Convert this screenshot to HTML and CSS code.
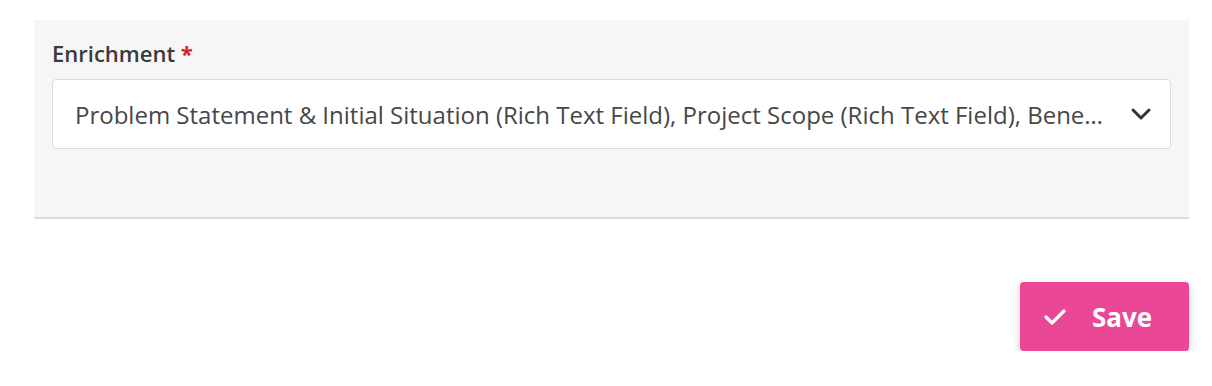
FILE: index.html
```html
<!DOCTYPE html>
<html>
<head>
<meta charset="utf-8">
<link rel="stylesheet" href="styles.css">
</head>
<body>
<div class="page">
  <div class="panel">
    <label class="field-label">Enrichment <span class="req">*</span></label>
    <div class="select">
      <span class="select-text">Problem Statement &amp; Initial Situation (Rich Text Field), Project Scope (Rich Text Field), Benefits (Rich Text Field), Risks (Rich Text Field)</span>
      <svg class="chev" width="22" height="14" viewBox="0 0 22 14"><path d="M3 3 L11 11 L19 3" fill="none" stroke="#333" stroke-width="3" stroke-linecap="round" stroke-linejoin="round"/></svg>
    </div>
  </div>
  <div class="actions">
    <button class="btn-save">
      <svg width="24" height="20" viewBox="0 0 24 20"><path d="M3 10 L9 16 L21 4" fill="none" stroke="#fff" stroke-width="3.2" stroke-linecap="round" stroke-linejoin="round"/></svg>
      <span>Save</span>
    </button>
  </div>
</div>
</body>
</html>
```
FILE: styles.css
```css
html, body {
  margin: 0;
  padding: 0;
  background: #fff;
  font-family: "Open Sans", "Noto Sans", sans-serif;
}
.page {
  padding: 20px 23px 0 34px;
}
.panel {
  background: #f6f6f6;
  border-bottom: 2px solid #dcdcdc;
  padding: 20px 18px 68px 18px;
}
.field-label {
  display: block;
  font-size: 22px;
  font-weight: 600;
  color: #3a3a3a;
  line-height: 26px;
  margin-bottom: 13px;
}
.req {
  color: #d0202a;
  font-weight: 700;
}
.select {
  display: flex;
  align-items: center;
  height: 70px;
  background: #fff;
  border: 1px solid #d9dce1;
  border-radius: 4px;
  padding: 0 18px 0 22px;
  box-sizing: border-box;
}
.select-text {
  flex: 1;
  min-width: 0;
  white-space: nowrap;
  overflow: hidden;
  text-overflow: ellipsis;
  font-size: 24px;
  color: #474747;
  padding-right: 26px;
}
.chev {
  flex: none;
}
.actions {
  display: flex;
  justify-content: flex-end;
  padding-top: 63px;
}
.btn-save {
  display: flex;
  align-items: center;
  gap: 25px;
  width: 169px;
  height: 69px;
  padding: 0 0 0 23px;
  border: none;
  border-radius: 4px;
  background: #ea4797;
  color: #fff;
  font-family: "Open Sans", "Noto Sans", sans-serif;
  font-size: 26px;
  font-weight: 700;
  box-shadow: 0 3px 8px rgba(0,0,0,0.2);
}
```
